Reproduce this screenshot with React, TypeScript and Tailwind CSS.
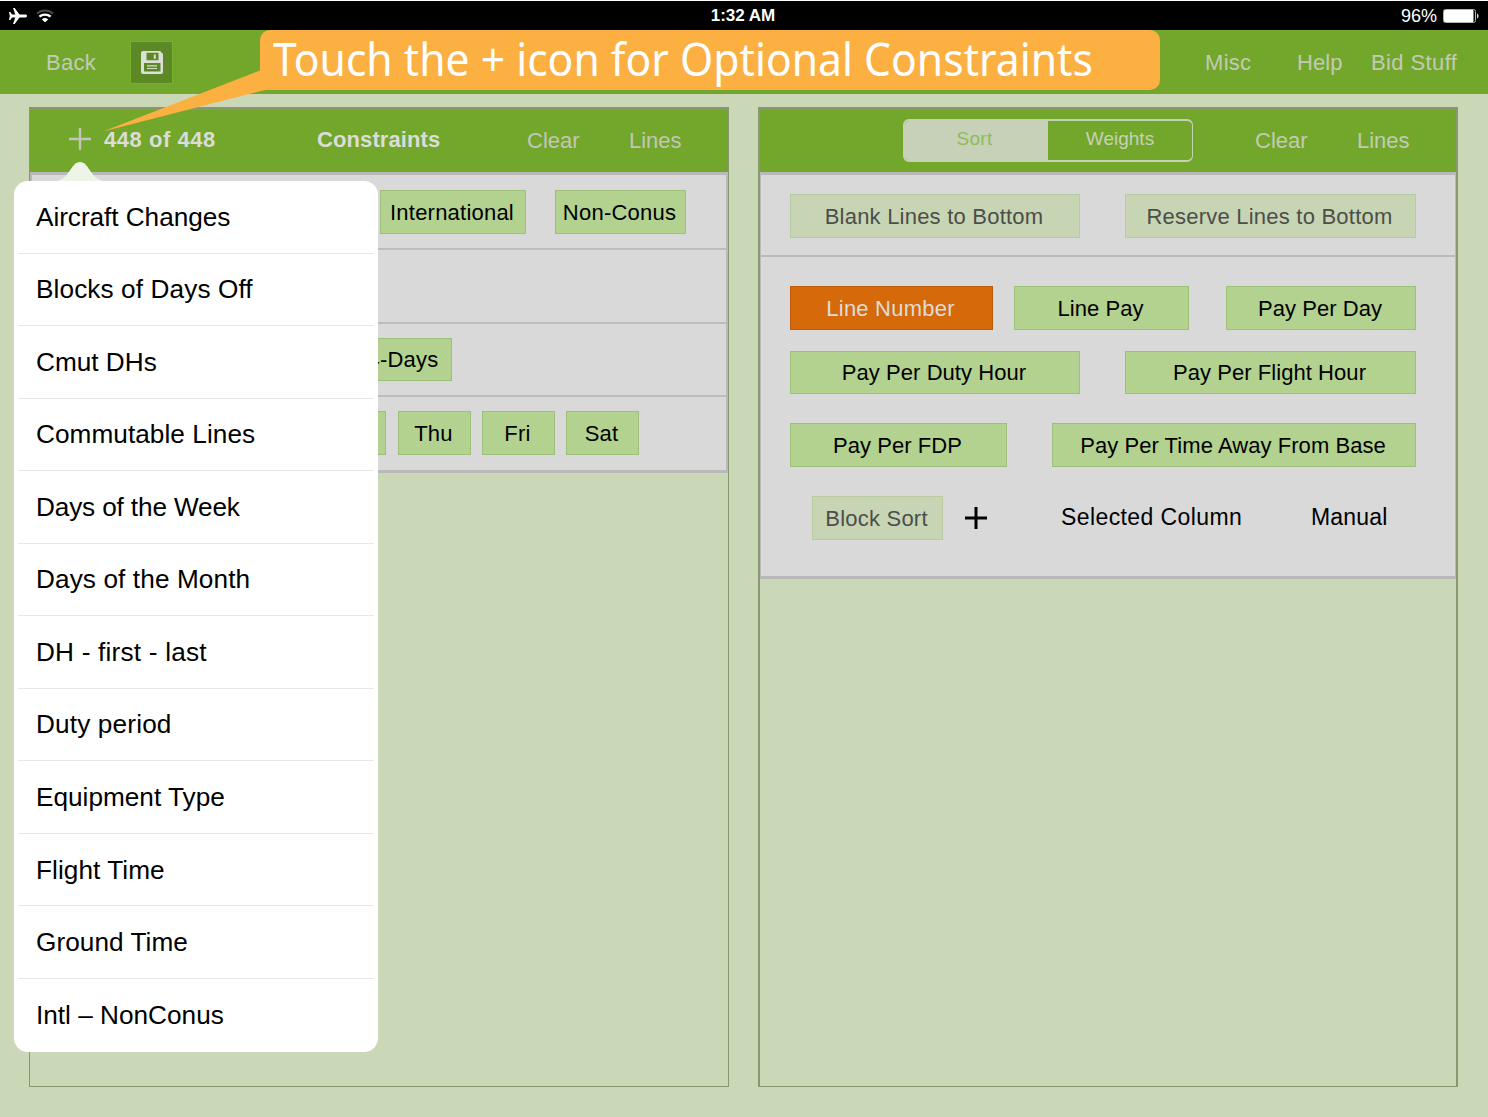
import type { ReactNode } from "react";

const menuItems = [
  { label: "Aircraft Changes", tracking: "tracking-[-0.05px]" },
  { label: "Blocks of Days Off", tracking: "tracking-[0.1px]" },
  { label: "Cmut DHs", tracking: "tracking-normal" },
  { label: "Commutable Lines", tracking: "tracking-[0.05px]" },
  { label: "Days of the Week", tracking: "tracking-[-0.15px]" },
  { label: "Days of the Month", tracking: "tracking-[0.1px]" },
  { label: "DH - first - last", tracking: "tracking-[0.2px]" },
  { label: "Duty period", tracking: "tracking-[0.15px]" },
  { label: "Equipment Type", tracking: "tracking-normal" },
  { label: "Flight Time", tracking: "tracking-[0.05px]" },
  { label: "Ground Time", tracking: "tracking-[0.05px]" },
  { label: "Intl – NonConus", tracking: "tracking-normal" },
];

const tones = {
  green: "bg-[#b3d18f] border-[#9cc077] text-black",
  pale: "bg-[#c7d5b4] border-[#b7cba0] text-[#4c4e4a]",
  orange: "bg-[#d66a0a] border-[#bd5c08] text-[#dcdcdc]",
};

function Chip({
  children,
  className = "",
  tone = "green",
  tight = false,
}: {
  children?: ReactNode;
  className?: string;
  tone?: keyof typeof tones;
  tight?: boolean;
}) {
  return (
    <button
      className={`flex h-11 shrink-0 items-center justify-center border pr-0.5 text-[22px] whitespace-nowrap ${
        tight ? "tracking-[0.06px]" : "tracking-[0.22px]"
      } ${tones[tone]} ${className}`}
    >
      {children}
    </button>
  );
}

function Plus({ className, width }: { className: string; width: number }) {
  return (
    <svg viewBox="0 0 24 24" className={className} stroke="currentColor" strokeWidth={width} fill="none">
      <path d="M12 1v22M1 12h22" />
    </svg>
  );
}

function StatusBar() {
  return (
    <div className="flex h-[30px] items-center border-t border-white bg-black text-[18px] text-white">
      <svg viewBox="0 0 18 16" className="ml-[9px] h-4 w-[18px]" fill="white">
        <rect x="1" y="6.600" width="17" height="2.800" rx="1.400" />
        <path d="M4 0h1.700L11.500 8L5.700 16H4L6.800 8z" />
        <path d="M0 4h1.300L4 8L1.300 12H0L.8 8z" />
      </svg>
      <svg viewBox="0 0 18 14" className="ml-[9px] h-3.5 w-[18px]" fill="none" strokeWidth="2">
        <path d="M1 4.600C5.400.5 12.600.5 17 4.600" stroke="#4a4a4a" />
        <path d="M3.400 7.700c3-2.900 8.200-2.900 11.200 0" stroke="white" strokeWidth="2.300" />
        <path d="M6.300 10.500c1.500-1.300 3.900-1.300 5.400 0L9 12.800z" fill="white" strokeWidth="1" stroke="white" />
      </svg>
      <span className="ml-[656px] w-[66px] text-center text-[17px] font-bold whitespace-nowrap">1:32 AM</span>
      <span className="ml-auto pt-px text-[18px]">96%</span>
      <svg viewBox="0 0 36 14" className="mr-[9px] ml-1.5 h-3.5 w-9">
        <rect x="0.5" y="0.5" width="32" height="13" rx="2" fill="none" stroke="#b5b5b5" />
        <rect x="1" y="1" width="29.500" height="12" rx="1" fill="white" />
        <path d="M34 4.500c2 .5 2 4.500 0 5z" fill="#d5d5d5" />
      </svg>
    </div>
  );
}

function NavBar() {
  return (
    <div className="flex h-16 items-center bg-[#72a72c] text-[22px] text-[#c2cbb4]">
      <span className="ml-[46px] w-[84px] tracking-[0.3px]">Back</span>
      <button className="flex size-[43px] items-center justify-center border border-[#76b02d] bg-[#5d8826]">
        <svg viewBox="0 0 22 23" className="h-[23px] w-[22px]" fillRule="evenodd">
          <path
            d="M2 0h17l3 3v18a2 2 0 0 1-2 2H2a2 2 0 0 1-2-2V2a2 2 0 0 1 2-2zM5.500 1.800v7.400h12V1.800zM3 12v8.500h16.500V12z"
            fill="#dbe0d4"
          />
          <path d="M12.800 3.500h2v4.300h-2zM6 14.200h10v1.200H6zM6 16.900h10v1.200H6z" fill="#dbe0d4" />
        </svg>
      </button>
      <span className="ml-[1032px] w-[92px] tracking-[0.3px]">Misc</span>
      <span className="w-[74px] tracking-[0.1px]">Help</span>
      <span className="tracking-[0.4px] whitespace-nowrap">Bid Stuff</span>
    </div>
  );
}

function ConstraintsPanel() {
  return (
    <section className="flex h-[980px] w-[700px] flex-col border border-t-[3px] border-[#87986f]">
      <header className="flex h-[62px] shrink-0 items-center bg-[#72a72c] pb-1 text-[22px] whitespace-nowrap text-[#c2c6b8]">
        <Plus className="ml-[38px] h-6 w-6 text-[#c2c6b8]" width={2.4} />
        <span className="ml-3 w-[213px] font-bold tracking-[0.55px] text-[#dcdcd8]">448 of 448</span>
        <span className="w-[210px] font-bold tracking-[0.1px] text-[#dcdcd8]">Constraints</span>
        <span className="w-[102px] pt-0.5">Clear</span>
        <span className="pt-0.5">Lines</span>
      </header>
      <div className="border-t-[3px] border-r-2 border-b-[3px] border-l-2 border-[#b9b9b9] bg-[#d9d9d9]">
        <div className="flex h-[75px] border-b-2 border-[#bdbdbd] pt-[15px] pl-[348px]">
          <Chip className="w-[146px]">International</Chip>
          <Chip className="ml-[29px] w-[131px]">Non-Conus</Chip>
        </div>
        <div className="h-[74px] border-b-2 border-[#bdbdbd]" />
        <div className="flex h-[73px] border-b-2 border-[#bdbdbd] pt-3.5 pl-[324px]">
          <Chip className="h-[43px] w-24">4-Days</Chip>
        </div>
        <div className="flex h-[73px] gap-[11px] pt-3.5 pl-[282px]">
          <Chip className="mr-px w-[72px]" />
          <Chip className="w-[73px]">Thu</Chip>
          <Chip className="w-[73px]">Fri</Chip>
          <Chip className="w-[73px]">Sat</Chip>
        </div>
      </div>
    </section>
  );
}

function SortPanel() {
  return (
    <section className="ml-[29px] flex h-[980px] w-[700px] flex-col border-t-[3px] border-r-2 border-b border-l-2 border-[#87986f]">
      <header className="flex h-[62px] shrink-0 items-center bg-[#72a72c] pb-1 text-[22px] whitespace-nowrap text-[#c2cbb4]">
        <div className="mt-0.5 ml-[143px] flex h-[43px] w-[290px] overflow-hidden rounded-[6px] border-2 border-r-[1.5px] border-[#c6d1b7] text-[19px]">
          <div className="flex w-[143px] items-center justify-center bg-[#c6d1b7] pr-1 pb-0.5 tracking-[0.3px] text-[#90bb5c]">Sort</div>
          <div className="flex flex-1 items-center justify-center pb-0.5 text-[#c6d1b7]">Weights</div>
        </div>
        <span className="ml-[62px] w-[102px] pt-0.5">Clear</span>
        <span className="pt-0.5">Lines</span>
      </header>
      <div className="border-x border-t-[3px] border-b-[3px] border-[#b9b9b9] bg-[#d9d9d9]">
        <div className="flex h-[82px] gap-[45px] border-b-2 border-[#b9b9b9] pt-[19px] pl-[29px]">
          <Chip tone="pale" className="w-[290px]">Blank Lines to Bottom</Chip>
          <Chip tone="pale" className="w-[291px]">Reserve Lines to Bottom</Chip>
        </div>
        <div className="flex h-[319px] flex-col pt-[29px] pl-[29px]">
          <div className="flex">
            <Chip tone="orange" className="w-[203px]">Line Number</Chip>
            <Chip tight className="ml-[21px] w-[175px]">Line Pay</Chip>
            <Chip tight className="ml-[37px] w-[190px]">Pay Per Day</Chip>
          </div>
          <div className="mt-[21px] flex gap-[45px]">
            <Chip tight className="h-[43px] w-[290px]">Pay Per Duty Hour</Chip>
            <Chip tight className="h-[43px] w-[291px]">Pay Per Flight Hour</Chip>
          </div>
          <div className="mt-[29px] flex gap-[45px]">
            <Chip tight className="w-[217px]">Pay Per FDP</Chip>
            <Chip tight className="w-[364px]">Pay Per Time Away From Base</Chip>
          </div>
          <div className="mt-[29px] ml-[22px] flex h-11 items-center text-[23px] tracking-[0.4px] whitespace-nowrap">
            <Chip tone="pale" className="w-[131px]">Block Sort</Chip>
            <Plus className="ml-[21px] h-6 w-6" width={3} />
            <span className="ml-[73px] w-[250px] pb-0.5">Selected Column</span>
            <span className="pb-0.5 tracking-[0.2px]">Manual</span>
          </div>
        </div>
      </div>
    </section>
  );
}

function ConstraintMenu() {
  return (
    <div className="absolute top-[162px] left-[14px] w-[363.500px]">
      <svg viewBox="0 0 48 20" className="ml-[42px] block h-[19px] w-12" fill="#eff4e8" preserveAspectRatio="none">
        <path d="M0 20C12 19 15 3 21 .8c2-1 4-1 6 0C33 3 36 19 48 20z" />
      </svg>
      <ul className="h-[870.500px] rounded-[14px] bg-white px-[4px] text-[26.200px]">
        {menuItems.map(({ label, tracking }, i) => (
          <li
            key={label}
            className={`flex h-[72.550px] items-center pt-px pl-[18px] whitespace-nowrap text-black ${tracking} ${
              i < menuItems.length - 1 ? "border-b border-[#e8e8ec]" : ""
            }`}
          >
            {label}
          </li>
        ))}
      </ul>
    </div>
  );
}

function Callout() {
  return (
    <>
      <svg viewBox="0 0 170 64" className="absolute top-[69px] left-[103px] h-16 w-[170px]" fill="#fcb042">
        <path d="M0 62.500L157 1.500L170 2V20L160 21.500z" />
      </svg>
      <div className="absolute top-[30px] left-[260px] h-[60px] w-[900px] rounded-[10px] bg-[#fcb042] pl-[13px] text-white">
        <span className="inline-block origin-left scale-x-[0.927] font-['Noto_Sans',sans-serif] text-[46px] leading-[56px] whitespace-nowrap">
          Touch the + icon for Optional Constraints
        </span>
      </div>
    </>
  );
}

export default function App() {
  return (
    <div className="relative h-[1117px] w-[1488px] overflow-hidden bg-[#cbd8b8] font-['Liberation_Sans',sans-serif]">
      <StatusBar />
      <NavBar />
      <main className="flex pt-[13px] pl-[29px]">
        <ConstraintsPanel />
        <SortPanel />
      </main>
      <ConstraintMenu />
      <Callout />
    </div>
  );
}
